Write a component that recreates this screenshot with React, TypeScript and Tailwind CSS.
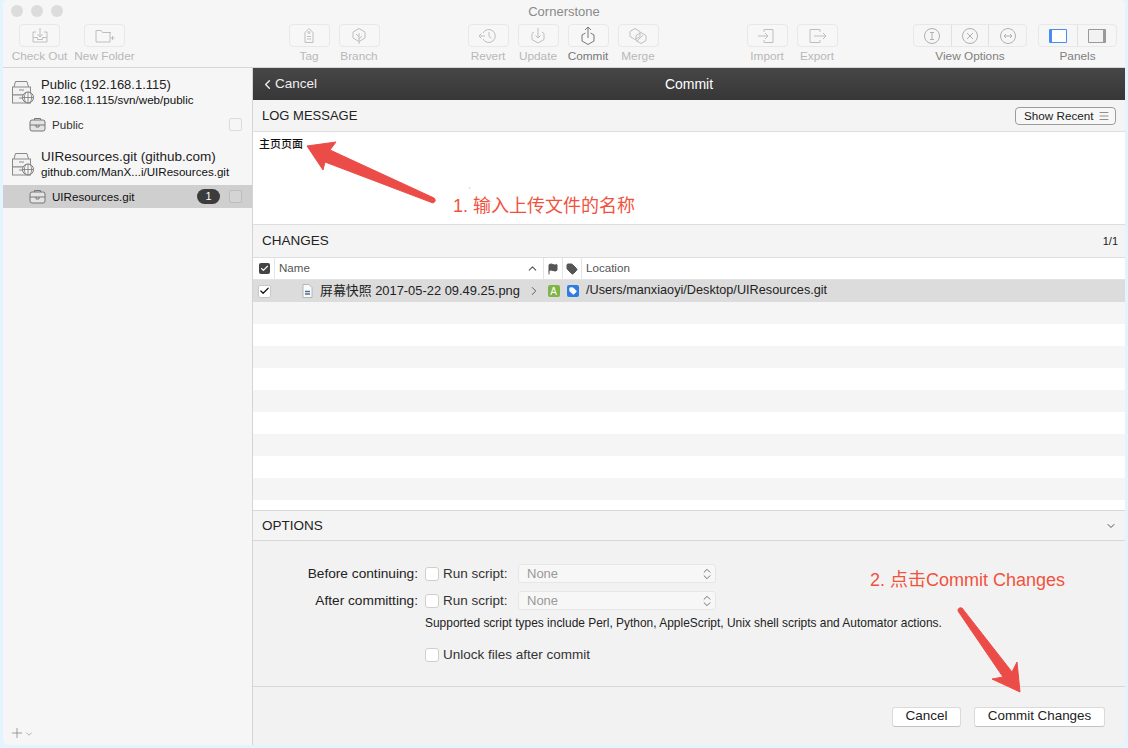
import type { ReactNode } from 'react'
import { ChevronLeft, ChevronDown, ChevronUp, ChevronRight, Check, Menu, Plus, Flag, Tag as TagIcon, ChevronsUpDown } from 'lucide-react'

const cjk = '"Liberation Sans", "Noto Sans CJK SC", sans-serif'

function Svg({ children, w = 24, h = 20, color = '#bebebe' }: { children: ReactNode; w?: number; h?: number; color?: string }) {
  return (
    <svg width={w} height={h} viewBox={`0 0 ${w} ${h}`} fill="none" stroke={color} strokeWidth="1">
      {children}
    </svg>
  )
}

function ToolItem({ label, icon, active, width }: { label: string; icon: ReactNode; active?: boolean; width: string }) {
  return (
    <div className={`flex flex-col items-center ${width}`}>
      <div className="flex h-[23px] w-[41px] items-center justify-center rounded-[4px] border border-[#e8e8e8] bg-[#f7f7f7]">{icon}</div>
      <div className={`mt-[2px] whitespace-nowrap text-[11.8px] leading-[15px] ${active ? 'text-[#777]' : 'text-[#b8b8b8]'}`}>{label}</div>
    </div>
  )
}

function ServerIcon() {
  return (
    <svg width="24" height="26" viewBox="0 0 24 26" fill="none" stroke="#8a8a8a" strokeWidth="1">
      <path d="M3 8 L4.5 2.5 H16 L17.5 8" fill="#f2f2f2" />
      <rect x="1.5" y="8" width="18" height="8" fill="#f2f2f2" />
      <rect x="1.5" y="16" width="18" height="8" fill="#f2f2f2" />
      <path d="M8 11h5M8 19h5" />
      <circle cx="17" cy="18.5" r="5.5" fill="#f6f6f6" stroke="#777" />
      <path d="M11.5 18.5h11M17 13v11M14.5 14c-1.5 3-1.5 6 0 9M19.5 14c1.5 3 1.5 6 0 9" stroke="#777" strokeWidth=".8" />
    </svg>
  )
}

function CaseIcon() {
  return (
    <svg width="17" height="15" viewBox="0 0 17 15" fill="none" stroke="#777" strokeWidth="1">
      <path d="M5.5 3V1.5h6V3" />
      <rect x="1" y="3" width="15" height="11" rx="2" fill="#e4e4e4" />
      <path d="M1 8h15M7 8v2h3V8" />
    </svg>
  )
}

function Repo({ title, titleSize, sub, child, badge, selected }: { title: string; titleSize: string; sub: string; child: string; badge?: string; selected?: boolean }) {
  return (
    <div className="mb-[11px]">
      <div className="flex h-[33px] items-center pl-[8px]">
        <ServerIcon />
        <div className="ml-[6px]">
          <div className={`${titleSize} leading-[16px] text-[#222]`}>{title}</div>
          <div className="text-[11.6px] leading-[14px] text-[#111]">{sub}</div>
        </div>
      </div>
      <div className={`mt-[5px] flex h-[23px] items-center pl-[26px] pr-[10px] ${selected ? 'bg-[#cfcfcf]' : ''}`}>
        <CaseIcon />
        <div className={`ml-[6px] flex-1 text-[11.6px] ${selected ? 'font-medium text-[#111]' : 'text-[#333]'}`}>{child}</div>
        {badge && <div className="mr-[9px] flex h-[15px] w-[23px] items-center justify-center rounded-full bg-[#3c3c3c] text-[11px] text-white">{badge}</div>}
        <div className={`h-[13px] w-[13px] rounded-[2px] border ${selected ? 'border-[#bdbdbd] bg-[#d4d4d4]' : 'border-[#dcdcdc] bg-[#f6f6f6]'}`} />
      </div>
    </div>
  )
}

function SectionHead({ title, size, right }: { title: string; size: string; right?: ReactNode }) {
  return (
    <div className="flex h-full items-center justify-between pl-[9px] pr-[7px]">
      <div className={`${size} text-[#222]`}>{title}</div>
      {right}
    </div>
  )
}

function ScriptRow({ label }: { label: string }) {
  return (
    <div className="flex h-[27px] items-center">
      <div className="w-[172px] pr-[7px] pt-[1px] text-right text-[13.7px] text-[#222]">{label}</div>
      <div className="h-[14px] w-[14px] rounded-[3px] border border-[#cfcfcf] bg-white" />
      <div className="ml-[4px] w-[75px] pt-[1px] text-[13.5px] text-[#333]">Run script:</div>
      <div className="flex h-[19px] w-[198px] items-center justify-between rounded-[3px] border border-[#e6e6e6] bg-[#f7f7f7] pl-[8px] pr-[1px] text-[13px] text-[#999]">
        None
        <ChevronsUpDown size={14} color="#666" strokeWidth={1.6} />
      </div>
    </div>
  )
}

const stripes = [true, false, true, false, true, false, true, false, true, false]

export default function App() {
  return (
    <div className="relative h-[748px] w-[1128px] overflow-hidden bg-[#e3f4fe] px-[3px] pb-[3px]" style={{ fontFamily: cjk }}>
      <div className="flex h-full flex-col overflow-hidden rounded-[6px] bg-[#f6f6f6]">
        {/* title + toolbar */}
        <div className="relative h-[68px] shrink-0 border-b border-[#d6d6d6] bg-[#f6f6f6]">
          <div className="absolute left-[8px] top-[5px] flex gap-[8px]">
            <div className="h-[12px] w-[12px] rounded-full bg-[#dcdcdc]" />
            <div className="h-[12px] w-[12px] rounded-full bg-[#dcdcdc]" />
            <div className="h-[12px] w-[12px] rounded-full bg-[#dcdcdc]" />
          </div>
          <div className="pt-[4px] text-center text-[13px] leading-[16px] text-[#8a8a8a]">Cornerstone</div>
          <div className="mt-[4px] flex">
            <div className="ml-[4px] flex">
              <ToolItem width="w-[65px]" label="Check Out" icon={<Svg><path d="M8 6H5v10h14V6h-3M12 2v9M9.500 8l2.500 3 2.500-3M5 11.500h4.500v2h5v-2H19" /></Svg>} />
              <ToolItem width="w-[65px]" label="New Folder" icon={<Svg><path d="M3 4.500h5l1.500 2H18M3 4.500V16h14V6.500M19.500 10v4M17.500 12h4" /></Svg>} />
            </div>
            <div className="ml-[147px] flex">
              <ToolItem width="w-[50px]" label="Tag" icon={<Svg><path d="M8 16.500V6.500l4-4 4 4v10zM10 10.500h4M10 13h4" /><circle cx="12" cy="6.500" r="1" /></Svg>} />
              <ToolItem width="w-[50px]" label="Branch" icon={<Svg><path d="M12 2.500l6 3.500v6l-6 3.500-6-3.500V6zM12 18V7M12 11l-3-3M12 13l3-3" /></Svg>} />
            </div>
            <div className="ml-[79px] flex">
              <ToolItem width="w-[50px]" label="Revert" icon={<Svg><path d="M7 7a6.500 6.500 0 1 1 0 6M13 6v4.500l2.500 1.500M3 10h6M5.500 7.500L3 10l2.500 2.500" /></Svg>} />
              <ToolItem width="w-[50px]" label="Update" icon={<Svg><path d="M8 6l-2 1.500v6l6 3.500 6-3.500v-6L16 6M12 2v10M9.500 9.500L12 12l2.500-2.500" /></Svg>} />
              <ToolItem width="w-[50px]" active label="Commit" icon={<Svg color="#777"><path d="M9.500 7L6 9v6l6 3.500L18 15V9l-3.500-2M12 1v11M9 4l3-3 3 3" /></Svg>} />
              <ToolItem width="w-[50px]" label="Merge" icon={<Svg><path d="M9 2.500l5 3v5l-5 3-5-3v-5zM15 6.500l5 3v5l-5 3-5-3v-5zM11 15l6-6" /></Svg>} />
            </div>
            <div className="ml-[79px] flex">
              <ToolItem width="w-[50px]" label="Import" icon={<Svg><path d="M9 6V3.500h9v13H9V14M3 10h10M10 7l3 3-3 3" /></Svg>} />
              <ToolItem width="w-[50px]" label="Export" icon={<Svg><path d="M15 6V3.500H5v13h10V14M9 10h12M18 7l3 3-3 3" /></Svg>} />
            </div>
            <div className="ml-[71px] flex w-[114px] flex-col items-center">
              <div className="flex h-[23px] w-full rounded-[4px] border border-[#e8e8e8]">
                <div className="flex flex-1 items-center justify-center border-r border-[#e0e0e0]">
                  <Svg w={18} h={18} color="#b0b0b0"><circle cx="9" cy="9" r="7.500" /><path d="M7 5.500h4M7 12.500h4M9 5.500v7" /></Svg>
                </div>
                <div className="flex flex-1 items-center justify-center border-r border-[#e0e0e0]">
                  <Svg w={18} h={18} color="#b0b0b0"><circle cx="9" cy="9" r="7.500" /><path d="M6 6l6 6M12 6l-6 6" /></Svg>
                </div>
                <div className="flex flex-1 items-center justify-center">
                  <Svg w={18} h={18} color="#b0b0b0"><circle cx="9" cy="9" r="7.500" /><path d="M5 9h8M7 7L5 9l2 2M11 7l2 2-2 2" /></Svg>
                </div>
              </div>
              <div className="mt-[2px] text-[11.8px] leading-[15px] text-[#808080]">View Options</div>
            </div>
            <div className="ml-[11px] flex w-[79px] flex-col items-center">
              <div className="flex h-[23px] w-full rounded-[4px] border border-[#e8e8e8]">
                <div className="flex flex-1 items-center justify-center border-r border-[#e0e0e0]">
                  <div className="h-[14px] w-[18px] rounded-[1px] border-[1.5px] border-l-[3px] border-[#4a8df0] bg-white" />
                </div>
                <div className="flex flex-1 items-center justify-center">
                  <div className="h-[14px] w-[18px] rounded-[1px] border border-r-[3px] border-[#999] bg-[#f2f2f2]" />
                </div>
              </div>
              <div className="mt-[2px] text-[11.8px] leading-[15px] text-[#808080]">Panels</div>
            </div>
          </div>
        </div>

        <div className="flex min-h-0 flex-1">
          {/* sidebar */}
          <div className="flex w-[250px] shrink-0 flex-col border-r border-[#d4d4d4] bg-[#f6f6f6] pt-[7px]">
            <div className="flex-1">
              <Repo title="Public (192.168.1.115)" titleSize="text-[13px]" sub="192.168.1.115/svn/web/public" child="Public" />
              <Repo title="UIResources.git (github.com)" titleSize="text-[13.5px]" sub="github.com/ManX...i/UIResources.git" child="UIResources.git" badge="1" selected />
            </div>
            <div className="flex h-[20px] items-start pl-[6px] text-[#888]">
              <Plus size={16} strokeWidth={1.2} />
              <ChevronDown size={10} strokeWidth={1.5} className="-ml-[1px] mt-[4px]" />
            </div>
          </div>

          {/* main */}
          <div className="flex min-w-0 flex-1 flex-col">
            <div className="relative flex h-[32px] shrink-0 items-center justify-center bg-gradient-to-b from-[#474747] to-[#373737]">
              <div className="absolute left-[8px] top-0 flex h-full items-center text-[13.5px] text-[#eee]">
                <ChevronLeft size={15} strokeWidth={2.2} className="-ml-[1px]" />
                <span>Cancel</span>
              </div>
              <div className="text-[14px] text-white">Commit</div>
            </div>

            <div className="h-[32px] shrink-0 border-b border-[#dedede] bg-[#f4f4f4]">
              <SectionHead
                title="LOG MESSAGE"
                size="text-[13px]"
                right={
                  <div className="mr-[2px] flex h-[18px] w-[101px] items-center justify-between rounded-[4px] border border-[#9c9c9c] bg-[#f7f7f7] pl-[8px] pr-[5px] text-[11.7px] text-[#222]">
                    Show Recent
                    <Menu size={12} strokeWidth={1.3} color="#555" />
                  </div>
                }
              />
            </div>
            <div className="h-[92px] shrink-0 bg-white pl-[6px] pt-[5px] text-[11px] font-medium leading-[14px] text-[#111]">主页页面</div>

            <div className="h-[34px] shrink-0 border-y border-[#dedede] bg-[#f4f4f4] pt-[1px]">
              <SectionHead title="CHANGES" size="text-[13.5px]" right={<div className="text-[11px] text-[#222]">1/1</div>} />
            </div>

            <div className="flex h-[22px] shrink-0 items-center border-b border-[#e2e2e2] bg-white text-[11.6px] leading-[14px] text-[#555]">
              <div className="flex w-[22px] items-center justify-center self-stretch border-r border-[#e4e4e4] pl-[1px]">
                <div className="flex h-[11px] w-[11px] items-center justify-center rounded-[2px] bg-[#444]">
                  <Check size={9} color="#fff" strokeWidth={3} />
                </div>
              </div>
              <div className="flex w-[269px] items-center justify-between self-stretch border-r border-[#e4e4e4] pb-[1px] pl-[4px] pr-[4px]">
                Name
                <ChevronUp size={13} strokeWidth={2} color="#555" />
              </div>
              <div className="flex w-[19px] items-center justify-center self-stretch border-r border-[#e4e4e4]">
                <Flag size={12} fill="#555" color="#555" />
              </div>
              <div className="flex w-[19px] items-center justify-center self-stretch border-r border-[#e4e4e4]">
                <TagIcon size={12} fill="#555" color="#555" />
              </div>
              <div className="pb-[1px] pl-[4px]">Location</div>
            </div>

            <div className="flex h-[22px] shrink-0 items-center bg-[#dcdcdc]">
              <div className="flex w-[22px] justify-center">
                <div className="flex h-[13px] w-[13px] items-center justify-center rounded-[2px] border border-[#c8c8c8] bg-white">
                  <Check size={12} color="#111" strokeWidth={2.6} />
                </div>
              </div>
              <div className="flex w-[269px] items-center pl-[27px] pr-[3px] text-[12.9px] text-[#222]">
                <svg width="11" height="14" viewBox="0 0 11 14" className="shrink-0" fill="#fafafa" stroke="#aaa" strokeWidth=".8">
                  <path d="M1 .5h6L10 3.500v10H1z" />
                  <path d="M3 7.500h5M3 10h5" stroke="#4d6d9a" strokeWidth="1.500" />
                </svg>
                <span className="ml-[7px] flex-1 whitespace-nowrap">屏幕快照 2017-05-22 09.49.25.png</span>
                <ChevronRight size={14} strokeWidth={1.6} color="#555" />
              </div>
              <div className="flex w-[19px] justify-center">
                <div className="flex h-[12px] w-[12px] items-center justify-center rounded-[2px] bg-[#7fb446] text-[10px] text-white">A</div>
              </div>
              <div className="flex w-[19px] justify-center">
                <div className="flex h-[12px] w-[12px] items-center justify-center rounded-[2px] bg-[#2f7de1]">
                  <TagIcon size={8} fill="#fff" color="#fff" />
                </div>
              </div>
              <div className="pl-[4px] text-[12.7px] text-[#222]">/Users/manxiaoyi/Desktop/UIResources.git</div>
            </div>

            <div className="flex-1 overflow-hidden bg-white">
              {stripes.map((on, i) => (
                <div key={i} className={`h-[22px] ${on ? 'bg-[#f5f5f5]' : 'bg-white'}`} />
              ))}
            </div>

            <div className="h-[31px] shrink-0 border-y border-[#d8d8d8] bg-[#f4f4f4] pt-[1px]">
              <div className="flex h-full items-center justify-between pl-[9px] pr-[8px]">
                <div className="text-[13.5px] text-[#222]">OPTIONS</div>
                <ChevronDown size={12} strokeWidth={2} color="#555" />
              </div>
            </div>

            <div className="h-[146px] shrink-0 border-b border-[#d8d8d8] bg-[#f2f2f2] pt-[19px]">
              <ScriptRow label="Before continuing:" />
              <ScriptRow label="After committing:" />
              <div className="ml-[172px] mt-[2px] text-[11.95px] leading-[14px] text-[#222]">Supported script types include Perl, Python, AppleScript, Unix shell scripts and Automator actions.</div>
              <div className="ml-[172px] mt-[15px] flex items-center">
                <div className="h-[14px] w-[14px] rounded-[3px] border border-[#cfcfcf] bg-white" />
                <div className="ml-[4px] text-[13.5px] text-[#333]">Unlock files after commit</div>
              </div>
            </div>

            <div className="flex h-[58px] shrink-0 items-start justify-end gap-[13px] bg-[#f2f2f2] pr-[20px] pt-[20px]">
              <div className="flex h-[20px] w-[69px] items-center justify-center rounded-[3px] border border-[#dadada] border-b-[#c4c4c4] bg-white pb-[1px] text-[13.5px] text-[#222]">Cancel</div>
              <div className="flex h-[20px] w-[131px] items-center justify-center rounded-[3px] border border-[#dadada] border-b-[#c4c4c4] bg-white pb-[1px] text-[13.4px] text-[#222]">Commit Changes</div>
            </div>
          </div>
        </div>
      </div>

      {/* red annotations */}
      <svg className="pointer-events-none absolute left-0 top-0" width="1128" height="748" viewBox="0 0 1128 748">
        <path d="M307 146L336 142L330 150L434 198Q437 201 433 203L325 162L323 170Z" fill="#ec4c48" stroke="#ec4c48" strokeWidth="1" strokeLinejoin="round" />
        <path d="M958 611Q958 607 962 608L1012 672L1017 662L1020 692L992 679L1003 677Z" fill="#ec4c48" stroke="#ec4c48" strokeWidth="1" strokeLinejoin="round" />
        <circle cx="469.500" cy="188" r=".8" fill="#f3b8b4" />
      </svg>
      <div className="absolute left-[453px] top-[195px] whitespace-nowrap text-[18px] leading-[22px] text-[#f0523d]">1. 输入上传文件的名称</div>
      <div className="absolute left-[870px] top-[569px] whitespace-nowrap text-[18px] leading-[22px] text-[#f0523d]">2. 点击Commit Changes</div>
    </div>
  )
}
